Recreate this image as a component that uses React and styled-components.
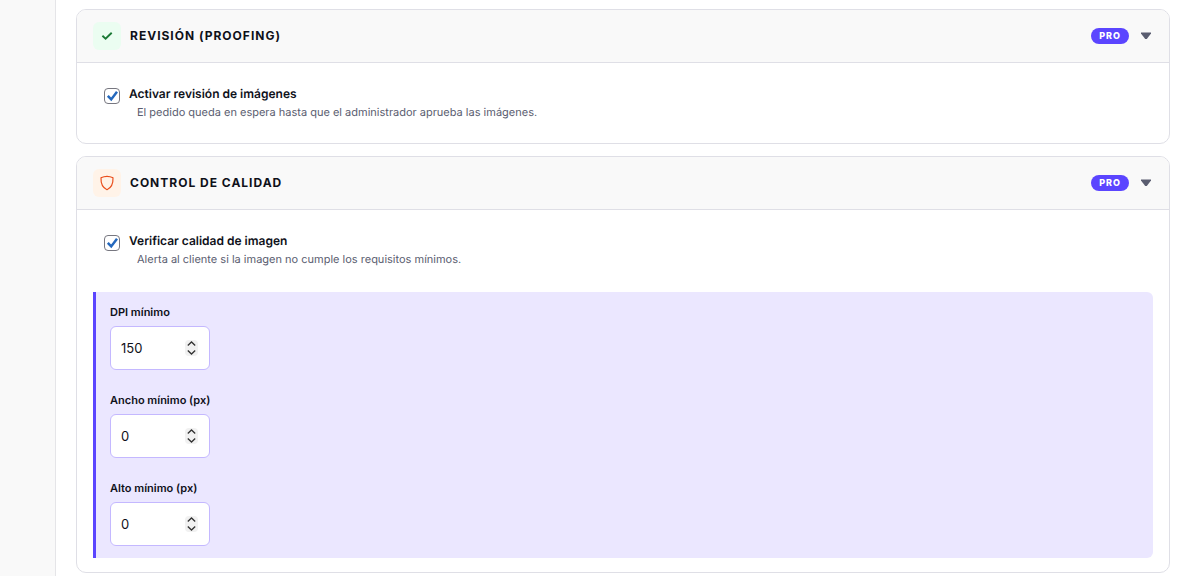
import React, { useState } from "react";
import styled, { createGlobalStyle } from "styled-components";

const GlobalStyle = createGlobalStyle`
  *, *::before, *::after { box-sizing: border-box; }
  body {
    margin: 0;
    background: #ffffff;
    color: #0f111a;
    font-family: Inter, "Liberation Sans", sans-serif;
    font-size: 13px;
    text-rendering: geometricPrecision;
  }
`;

const Page = styled.div`
  display: flex;
  min-height: 100vh;
`;

const Sidebar = styled.aside`
  flex: 0 0 56px;
  background: #f9f9f9;
  border-right: 1px solid #e5e5e8;
`;

const Content = styled.main`
  flex: 1;
  min-width: 0;
  display: flex;
  flex-direction: column;
  gap: 12px;
  padding: 9px 17px 0 20px;
`;

const Card = styled.section`
  background: #ffffff;
  border: 1px solid #dfdfe6;
  border-radius: 10px;
  overflow: hidden;
`;

const CardHeader = styled.button`
  display: flex;
  align-items: center;
  width: 100%;
  padding: 12px 16px;
  border: 0;
  border-bottom: 1px solid #dfdfe6;
  background: #f9f9f9;
  color: inherit;
  font: inherit;
  text-align: left;
  cursor: pointer;
`;

const IconTile = styled.span`
  display: flex;
  align-items: center;
  justify-content: center;
  width: 28px;
  height: 28px;
  margin-right: 9px;
  border-radius: 6px;
  background: ${(p) => p.$background};
`;

const Title = styled.span`
  flex: 1;
  font-size: 12px;
  font-weight: 700;
  line-height: 16px;
  letter-spacing: 1px;
  text-transform: uppercase;
`;

const Badge = styled.span`
  padding: 0 8px;
  border-radius: 8px;
  background: #5b45ff;
  color: #ffffff;
  font-size: 9px;
  font-weight: 800;
  line-height: 16px;
  letter-spacing: 1px;
`;

const Caret = styled.svg`
  display: block;
  margin-left: 12px;
  margin-right: 2px;
`;

const CardBody = styled.div`
  padding: 14px 16px;
`;

const Option = styled.div`
  display: flex;
  align-items: flex-start;
  gap: 9px;
  padding: 8px 11px;
`;

const CheckWrap = styled.span`
  position: relative;
  display: block;
  width: 16px;
  height: 16px;
  margin-top: 3px;

  svg {
    position: absolute;
    inset: 0;
    pointer-events: none;
  }
`;

const Checkbox = styled.input`
  appearance: none;
  display: block;
  width: 16px;
  height: 16px;
  margin: 0;
  border: 1px solid #777780;
  border-radius: 4px;
  background: #ffffff;

  &:not(:checked) + svg { display: none; }
`;

const OptionLabel = styled.label`
  display: block;
  font-size: 12px;
  font-weight: 600;
  line-height: 18px;
`;

const Hint = styled.p`
  margin: 0 0 0 8px;
  color: #5a5d70;
  font-size: 11px;
  line-height: 18px;
`;

const Settings = styled.div`
  display: flex;
  flex-direction: column;
  gap: 22px;
  margin-top: 16px;
  padding: 12px 14px;
  border-left: 3px solid #5b45ff;
  border-radius: 0 6px 6px 0;
  background: #ebe7ff;
`;

const Field = styled.div`
  display: flex;
  flex-direction: column;
  align-items: flex-start;
  gap: 6px;
`;

const FieldLabel = styled.label`
  font-size: 11px;
  font-weight: 600;
  line-height: 16px;
`;

const NumberWrap = styled.span`
  position: relative;
  display: block;

  svg {
    position: absolute;
    top: 14px;
    right: 12px;
    pointer-events: none;
  }
`;

const NumberInput = styled.input`
  appearance: textfield;
  display: block;
  width: 100px;
  height: 44px;
  padding: 0 28px 0 10px;
  border: 1px solid #c4b8ff;
  border-radius: 6px;
  background: #ffffff;
  color: #0f111a;
  font-family: inherit;
  font-size: 13px;

  &::-webkit-inner-spin-button {
    appearance: none;
    margin: 0;
  }
`;

function CheckIcon() {
  return (
    <svg width="12" height="12" viewBox="0 0 12 12" fill="none" aria-hidden="true">
      <path d="M1.4 5.8 4.6 8.7 10.700 2.700" stroke="#1c7a36" strokeWidth="1.9" />
    </svg>
  );
}

function ShieldIcon() {
  return (
    <svg width="14" height="16" viewBox="0 0 14 16" fill="none" aria-hidden="true">
      <path
        d="M7 1.3C5 1.3 2.7 1.9 1 2.8c-.2 4.8.7 9.6 6 11.9 5.300-2.300 6.200-7.100 6-11.900C11.300 1.900 9 1.300 7 1.300Z"
        stroke="#ea4f1d"
        strokeWidth="1.2"
        strokeLinejoin="round"
      />
    </svg>
  );
}

function Section({ title, icon, tile, children }) {
  const [open, setOpen] = useState(true);
  return (
    <Card>
      <CardHeader type="button" aria-expanded={open} onClick={() => setOpen(!open)}>
        <IconTile $background={tile}>{icon}</IconTile>
        <Title>{title}</Title>
        <Badge>PRO</Badge>
        <Caret width="10" height="8" viewBox="0 0 10 8" aria-hidden="true">
          <path d="M0 .6h10v1L5.800 7H4.200L0 1.600Z" fill="#5a5d70" />
        </Caret>
      </CardHeader>
      {open && <CardBody>{children}</CardBody>}
    </Card>
  );
}

function CheckOption({ id, label, hint }) {
  return (
    <Option>
      <CheckWrap>
        <Checkbox id={id} type="checkbox" defaultChecked aria-describedby={`${id}-hint`} />
        <svg width="16" height="16" viewBox="0 0 16 16" fill="none" aria-hidden="true">
          <path d="M3.800 7.900 7.200 11.400 13 3.700" stroke="#2468bd" strokeWidth="2.500" />
        </svg>
      </CheckWrap>
      <div>
        <OptionLabel htmlFor={id}>{label}</OptionLabel>
        <Hint id={`${id}-hint`}>{hint}</Hint>
      </div>
    </Option>
  );
}

function NumberField({ id, label, value }) {
  return (
    <Field>
      <FieldLabel htmlFor={id}>{label}</FieldLabel>
      <NumberWrap>
        <NumberInput id={id} type="number" min="0" defaultValue={value} />
        <svg width="13" height="16" viewBox="0 0 13 16" fill="none" aria-hidden="true">
          <rect width="13" height="16" rx="4" fill="#f1f1f1" />
          <path d="M2.800 5.500 6.500 2l3.700 3.500M2.800 10.500 6.500 14l3.700-3.500" stroke="#333333" strokeWidth="1.300" />
        </svg>
      </NumberWrap>
    </Field>
  );
}

export default function App() {
  return (
    <>
      <GlobalStyle />
      <Page>
        <Sidebar />
        <Content>
          <Section title="Revisión (Proofing)" icon={<CheckIcon />} tile="#ebfdf1">
            <CheckOption
              id="proofing"
              label="Activar revisión de imágenes"
              hint="El pedido queda en espera hasta que el administrador aprueba las imágenes."
            />
          </Section>
          <Section title="Control de calidad" icon={<ShieldIcon />} tile="#fff3e8">
            <CheckOption
              id="quality"
              label="Verificar calidad de imagen"
              hint="Alerta al cliente si la imagen no cumple los requisitos mínimos."
            />
            <Settings>
              <NumberField id="dpi" label="DPI mínimo" value={150} />
              <NumberField id="min-width" label="Ancho mínimo (px)" value={0} />
              <NumberField id="min-height" label="Alto mínimo (px)" value={0} />
            </Settings>
          </Section>
        </Content>
      </Page>
    </>
  );
}
